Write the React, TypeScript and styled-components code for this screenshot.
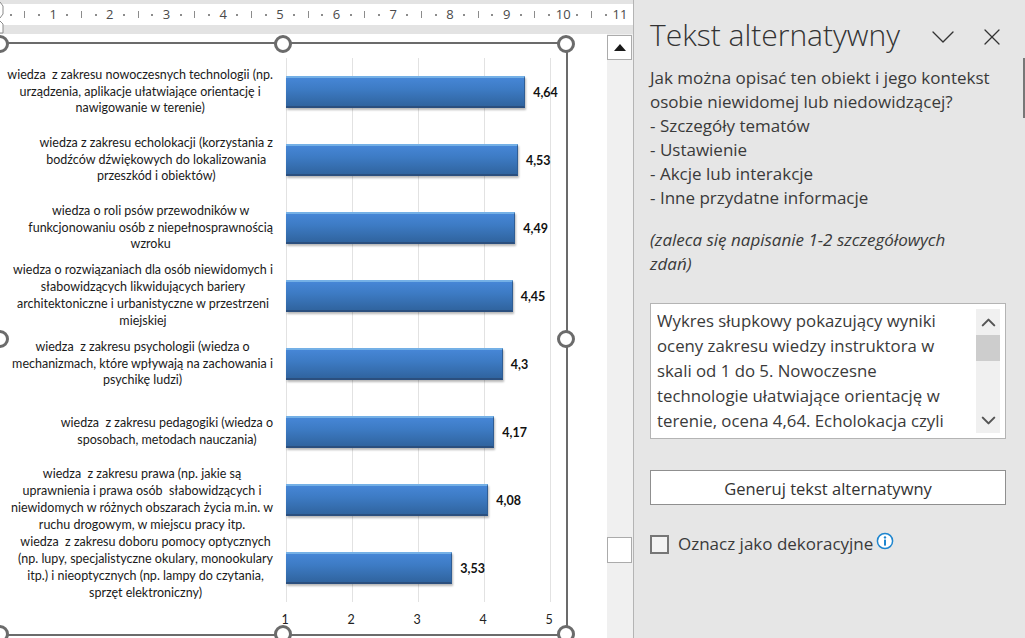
import { Fragment } from "react";
import styled, { createGlobalStyle } from "styled-components";
import { ChevronDown, ChevronUp, X } from "lucide-react";

const UNIT = 66;
const BAR_UNIT = 65.7;

const rows = [
  {
    value: 4.64,
    lines: [
      "wiedza  z zakresu nowoczesnych technologii (np.",
      "urządzenia, aplikacje ułatwiające orientację i",
      "nawigowanie w terenie)",
    ],
  },
  {
    value: 4.53,
    lines: [
      "wiedza z zakresu echolokacji (korzystania z",
      "bodźców dźwiękowych do lokalizowania",
      "przeszkód i obiektów)",
    ],
  },
  {
    value: 4.49,
    lines: [
      "wiedza o roli psów przewodników w",
      "funkcjonowaniu osób z niepełnosprawnością",
      "wzroku",
    ],
  },
  {
    value: 4.45,
    lines: [
      "wiedza o rozwiązaniach dla osób niewidomych i",
      "słabowidzących likwidujących bariery",
      "architektoniczne i urbanistyczne w przestrzeni",
      "miejskiej",
    ],
  },
  {
    value: 4.3,
    lines: [
      "wiedza  z zakresu psychologii (wiedza o",
      "mechanizmach, które wpływają na zachowania i",
      "psychikę ludzi)",
    ],
  },
  {
    value: 4.17,
    lines: ["wiedza  z zakresu pedagogiki (wiedza o", "sposobach, metodach nauczania)"],
  },
  {
    value: 4.08,
    lines: [
      "wiedza  z zakresu prawa (np. jakie są",
      "uprawnienia i prawa osób  słabowidzących i",
      "niewidomych w różnych obszarach życia m.in. w",
      "ruchu drogowym, w miejscu pracy itp.",
    ],
  },
  {
    value: 3.53,
    lines: [
      "wiedza  z zakresu doboru pomocy optycznych",
      "(np. lupy, specjalistyczne okulary, monookulary",
      "itp.) i nieoptycznych (np. lampy do czytania,",
      "sprzęt elektroniczny)",
    ],
  },
];

const handles = [
  { x: 0, y: 0 },
  { x: 50, y: 0 },
  { x: 100, y: 0 },
  { x: 0, y: 50 },
  { x: 100, y: 50 },
  { x: 0, y: 100 },
  { x: 50, y: 100 },
  { x: 100, y: 100 },
];

const hints = [
  "- Szczegóły tematów",
  "- Ustawienie",
  "- Akcje lub interakcje",
  "- Inne przydatne informacje",
];

const formatValue = (value: number) => String(value).replace(".", ",");

export default function App() {
  return (
    <>
      <GlobalStyle />
      <Window>
        <Workspace>
          <Ruler>
            <RulerCorner viewBox="0 0 6 34" aria-hidden="true">
              <path d="M0 2 L3 6 V14 L0 18 M0 21 L3 24 V33 H0" fill="#fff" stroke="#8a8a8a" />
            </RulerCorner>
            <RulerMark>
              <Dot />
            </RulerMark>
            <RulerMark>
              <Tick />
            </RulerMark>
            <RulerMark>
              <Dot />
            </RulerMark>
            {Array.from({ length: 11 }, (_, index) => (
              <Fragment key={index}>
                <RulerMark>{index + 1}</RulerMark>
                {index < 10 && (
                  <>
                    <RulerMark>
                      <Dot />
                    </RulerMark>
                    <RulerMark>
                      <Tick />
                    </RulerMark>
                    <RulerMark>
                      <Dot />
                    </RulerMark>
                  </>
                )}
              </Fragment>
            ))}
          </Ruler>

          <Editor>
            <Page>
              <ChartFrame>
                {handles.map((handle) => (
                  <Handle
                    key={`${handle.x}-${handle.y}`}
                    style={{ left: `${handle.x}%`, top: `${handle.y}%` }}
                  />
                ))}
                <Chart>
                  {rows.map((row) => (
                    <Row key={row.value}>
                      <Label>
                        <LabelText>
                          {row.lines.map((line) => (
                            <div key={line}>{line}</div>
                          ))}
                        </LabelText>
                      </Label>
                      <Track>
                        <Bar style={{ width: (row.value - 1) * BAR_UNIT }} />
                        <Value>{formatValue(row.value)}</Value>
                      </Track>
                    </Row>
                  ))}
                  <Axis>
                    {[1, 2, 3, 4, 5].map((tick) => (
                      <AxisTick key={tick}>{tick}</AxisTick>
                    ))}
                  </Axis>
                </Chart>
              </ChartFrame>
            </Page>

            <Scrollbar>
              <ScrollButton>
                <svg width="12" height="7" viewBox="0 0 12 7" aria-hidden="true">
                  <path d="M6 0 L12 7 H0 Z" fill="#1a1a1a" />
                </svg>
              </ScrollButton>
              <ScrollThumb />
            </Scrollbar>
          </Editor>
        </Workspace>

        <Panel>
          <PanelHeader>
            <PanelTitle>Tekst alternatywny</PanelTitle>
            <PanelActions>
              <ChevronDown size={40} strokeWidth={0.8} />
              <X size={28} strokeWidth={1.1} />
            </PanelActions>
          </PanelHeader>

          <Prompt>
            Jak można opisać ten obiekt i jego kontekst
            <br />
            osobie niewidomej lub niedowidzącej?
            {hints.map((hint) => (
              <div key={hint}>{hint}</div>
            ))}
          </Prompt>

          <Advice>
            (zaleca się napisanie 1-2 szczegółowych
            <br />
            zdań)
          </Advice>

          <AltBox>
            <AltText>
              Wykres słupkowy pokazujący wyniki
              <br />
              oceny zakresu wiedzy instruktora w
              <br />
              skali od 1 do 5. Nowoczesne
              <br />
              technologie ułatwiające orientację w
              <br />
              terenie, ocena 4,64. Echolokacja czyli
            </AltText>
            <AltScroll>
              <AltArrow>
                <ChevronUp size={23} strokeWidth={2.2} />
              </AltArrow>
              <AltThumb />
              <AltSpacer />
              <AltArrow>
                <ChevronDown size={23} strokeWidth={2.2} />
              </AltArrow>
            </AltScroll>
          </AltBox>

          <GenerateButton type="button">Generuj tekst alternatywny</GenerateButton>

          <DecorativeRow>
            <Checkbox />
            <span>Oznacz jako dekoracyjne</span>
            <InfoIcon viewBox="0 0 18 18" aria-hidden="true">
              <circle cx="9" cy="9" r="7.6" fill="#fff" stroke="#1f86cf" strokeWidth="1.5" />
              <circle cx="9" cy="5.4" r="1.2" fill="#1f86cf" />
              <rect x="8" y="7.6" width="2" height="6" fill="#1f86cf" />
            </InfoIcon>
          </DecorativeRow>

          <PanelScrollMark />
        </Panel>
      </Window>
    </>
  );
}

const GlobalStyle = createGlobalStyle`
  html, body {
    margin: 0;
    padding: 0;
    background: #e6e6e6;
  }
`;

const Window = styled.div`
  width: 1025px;
  height: 638px;
  display: flex;
  overflow: hidden;
`;

const Workspace = styled.div`
  width: 633px;
  flex: none;
  display: flex;
  flex-direction: column;
  padding-top: 4px;
  box-sizing: border-box;
  background: #e3e3e3;
`;

const Ruler = styled.div`
  position: relative;
  height: 21px;
  display: flex;
  align-items: center;
  padding-left: 3.5px;
  background: #fff;
  color: #4a4a4a;
  font: 13px/21px "Open Sans", sans-serif;
`;

const RulerCorner = styled.svg`
  position: absolute;
  left: 0;
  top: -4px;
  width: 6px;
  height: 34px;
`;

const RulerMark = styled.div`
  width: 14.175px;
  flex: none;
  display: flex;
  justify-content: center;
  align-items: center;
`;

const Dot = styled.span`
  width: 2px;
  height: 2px;
  background: #8c8c8c;
`;

const Tick = styled.span`
  width: 1px;
  height: 7px;
  background: #8c8c8c;
`;

const Editor = styled.div`
  flex: 1;
  min-height: 0;
  display: flex;
  margin-top: 9px;
  background: #fff;
`;

const Page = styled.div`
  flex: 1;
  min-width: 0;
  padding-top: 8px;
`;

const ChartFrame = styled.div`
  position: relative;
  width: 570px;
  height: 594px;
  margin-left: -2px;
  box-sizing: border-box;
  border: 2px solid #6b6b6b;
`;

const Handle = styled.span`
  position: absolute;
  width: 18px;
  height: 18px;
  margin: -9px 0 0 -9px;
  box-sizing: border-box;
  border: 3px solid #6b6b6b;
  border-radius: 50%;
  background: #fff;
`;

const Chart = styled.div`
  display: flex;
  flex-direction: column;
  padding: 14px 0 0 1px;
`;

const Row = styled.div`
  height: 68px;
  display: flex;
  align-items: stretch;
`;

const Label = styled.div`
  width: 272px;
  flex: none;
  display: flex;
  justify-content: flex-end;
  align-items: center;
`;

const LabelText = styled.div`
  color: #1a1a1a;
  font: 12.5px/16.8px Lato, sans-serif;
  text-align: center;
  white-space: pre;
`;

const Track = styled.div`
  flex: 1;
  display: flex;
  align-items: center;
  gap: 8px;
  margin-left: 13px;
  background: repeating-linear-gradient(
    to right,
    #e2e2e2 0,
    #e2e2e2 1px,
    transparent 1px,
    transparent ${UNIT}px
  );
`;

const Bar = styled.div`
  height: 32px;
  box-sizing: border-box;
  border-top: 2px solid #74b0e6;
  border-right: 1px solid #2f5d94;
  border-bottom: 2px solid #2b4f7e;
  background: linear-gradient(to bottom, #4686d6, #3d7bc4 40%, #30649f);
  box-shadow: 1px 2px 2px rgba(0, 0, 0, 0.28);
`;

const Value = styled.span`
  color: #111;
  font: 700 12.5px Lato, sans-serif;
`;

const Axis = styled.div`
  display: flex;
  margin: 10px 0 0 251px;
`;

const AxisTick = styled.span`
  width: ${UNIT}px;
  flex: none;
  text-align: center;
  color: #222;
  font: 12.5px/16px Lato, sans-serif;
`;

const Scrollbar = styled.div`
  width: 26px;
  flex: none;
  display: flex;
  flex-direction: column;
  align-items: flex-start;
  padding-top: 1px;
  box-sizing: border-box;
  background: #f0f0f0;
`;

const ScrollButton = styled.div`
  width: 25px;
  height: 25px;
  display: flex;
  align-items: center;
  justify-content: center;
  box-sizing: border-box;
  border: 1px solid #ababab;
  background: #fff;
`;

const ScrollThumb = styled.div`
  width: 25px;
  height: 26px;
  margin-top: 477px;
  box-sizing: border-box;
  border: 1px solid #ababab;
  background: #fff;
`;

const Panel = styled.aside`
  position: relative;
  flex: 1;
  min-width: 0;
  box-sizing: border-box;
  padding: 6px 19px 0 16px;
  border-left: 1px solid #b4b4b4;
  background: #e6e6e6;
  color: #3a3a3a;
  font: 17px/24px "Open Sans", sans-serif;
  white-space: nowrap;
`;

const PanelHeader = styled.div`
  height: 60px;
  display: flex;
  justify-content: space-between;
  align-items: flex-start;
`;

const PanelTitle = styled.h2`
  margin: 0;
  color: #333;
  font: 300 30px/58px "Open Sans", sans-serif;
`;

const PanelActions = styled.div`
  display: flex;
  align-items: center;
  gap: 15px;
  padding: 11px 1px 0 0;
  margin-right: -1px;
  color: #333;
`;

const Prompt = styled.div``;

const Advice = styled.div`
  margin-top: 18px;
  font-style: italic;
`;

const AltBox = styled.div`
  height: 136px;
  display: flex;
  justify-content: space-between;
  margin-top: 27px;
  padding: 5px 5px 5px 6px;
  box-sizing: border-box;
  border: 1px solid #b4b4b4;
  background: #fff;
`;

const AltText = styled.div`
  overflow: hidden;
  margin-top: -1px;
  font-size: 16.8px;
  line-height: 25px;
`;

const AltScroll = styled.div`
  width: 24px;
  display: flex;
  flex-direction: column;
  background: #f0f0f0;
  color: #555;
`;

const AltArrow = styled.div`
  height: 26px;
  display: flex;
  align-items: center;
  justify-content: center;
`;

const AltThumb = styled.div`
  height: 26px;
  background: #cdcdcd;
`;

const AltSpacer = styled.div`
  flex: 1;
`;

const GenerateButton = styled.button`
  width: 100%;
  height: 35px;
  display: block;
  margin-top: 31px;
  padding: 1px 0 0;
  border: 1px solid #8f8f8f;
  background: #fff;
  color: #333;
  font: 16.5px "Open Sans", sans-serif;
`;

const DecorativeRow = styled.div`
  display: flex;
  align-items: center;
  margin-top: 27px;
`;

const Checkbox = styled.span`
  width: 19px;
  height: 19px;
  margin-right: 9px;
  box-sizing: border-box;
  border: 2px solid #767676;
  background: #f3f3f3;
`;

const InfoIcon = styled.svg`
  width: 18px;
  height: 18px;
  margin: -6px 0 0 3px;
`;

const PanelScrollMark = styled.span`
  position: absolute;
  right: 0;
  top: 58px;
  width: 2px;
  height: 60px;
  background: #777;
`;
